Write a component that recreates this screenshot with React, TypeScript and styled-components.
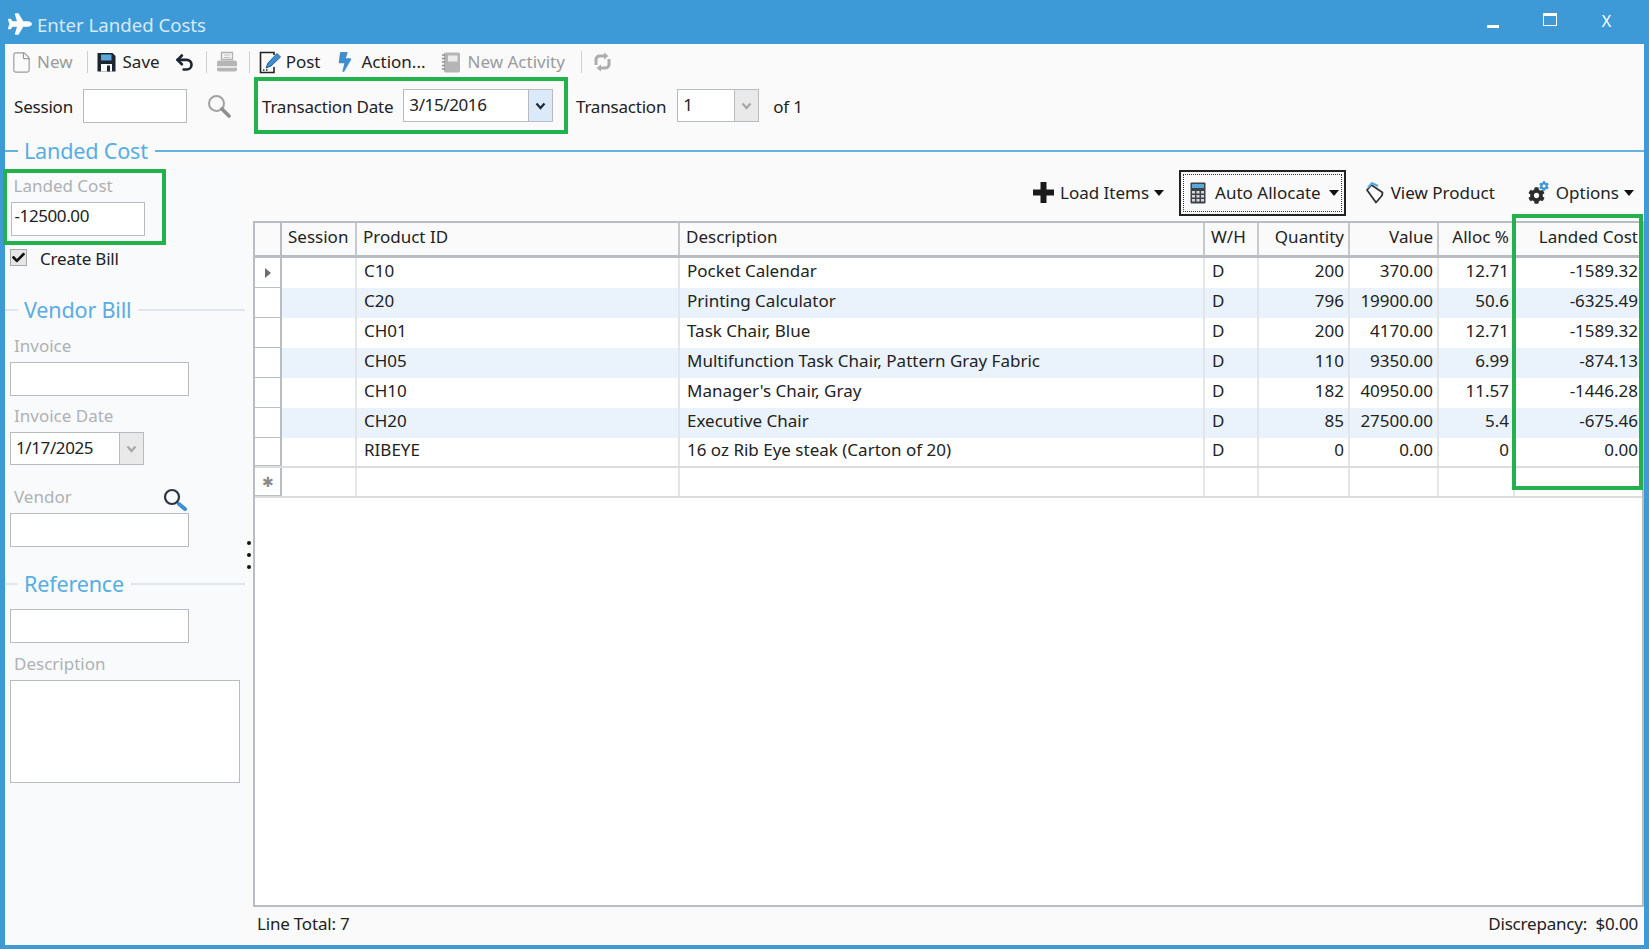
import { ReactNode } from "react";
import styled, { createGlobalStyle } from "styled-components";
import { File, Undo2 } from "lucide-react";
import { FaBolt, FaCheck, FaCog, FaPlane } from "react-icons/fa";

const GlobalStyle = createGlobalStyle`
  html, body {
    margin: 0;
    padding: 0;
    height: 100%;
    overflow: hidden;
    background: #fafafa;
  }
  * {
    box-sizing: border-box;
  }
`;

const Window = styled.div`
  display: flex;
  flex-direction: column;
  width: 1649px;
  height: 949px;
  background: #fafafa;
  color: #222;
  font-family: "Noto Sans", "Open Sans", sans-serif;
  font-size: 17px;
  border: solid #3e9ad6;
  border-width: 0 5px 4px 5px;
`;

const TitleBar = styled.div`
  display: flex;
  align-items: center;
  flex: none;
  height: 44px;
  margin: 0 -5px;
  padding: 4px 14px 0 8px;
  background: #3e9ad6;
  color: #d6e9f6;
  font-size: 18.6px;
`;

const TitleText = styled.span`
  margin-left: 5px;
  flex: 1;
`;

const WindowControl = styled.div`
  display: flex;
  align-items: center;
  justify-content: center;
  width: 57px;
  height: 30px;
  margin-bottom: 6px;
  color: #fff;
`;

const MinimizeGlyph = styled.div`
  width: 12px;
  height: 3px;
  margin-top: 10px;
  background: #fff;
`;

const MaximizeGlyph = styled.div`
  width: 14px;
  height: 13px;
  margin-top: -3px;
  border: 1.5px solid #fff;
  border-top-width: 3px;
`;

const CloseGlyph = styled.span`
  font-size: 16px;
`;

const Toolbar = styled.div`
  display: flex;
  align-items: center;
  flex: none;
  height: 33px;
  padding: 3px 0 0 5px;
`;

const ToolItem = styled.div<{ $muted?: boolean; $gap?: number; $left?: number }>`
  display: flex;
  align-items: center;
  gap: ${(p) => p.$gap ?? 7}px;
  margin-left: ${(p) => p.$left ?? 0}px;
  color: ${(p) => (p.$muted ? "#9a9a9a" : "#222")};
`;

const ToolLabel = styled.span`
  margin-top: -2px;
`;

const ToolSeparator = styled.div<{ $left?: number }>`
  width: 1px;
  height: 22px;
  margin-left: ${(p) => p.$left ?? 14}px;
  background: #cfcfcf;
`;

const FieldRow = styled.div`
  display: flex;
  align-items: center;
  flex: none;
  height: 57px;
  padding-left: 9px;
`;

const PlainLabel = styled.span<{ $left?: number }>`
  margin-left: ${(p) => p.$left ?? 0}px;
  padding-top: 2px;
  letter-spacing: -0.2px;
`;

const TextBox = styled.div<{ $width: number; $height?: number; $top?: number; $left?: number }>`
  display: flex;
  align-items: center;
  flex: none;
  width: ${(p) => p.$width}px;
  height: ${(p) => p.$height ?? 34}px;
  margin-top: ${(p) => p.$top ?? 0}px;
  margin-left: ${(p) => p.$left ?? 0}px;
  padding: 0 0 3px 5px;
  background: #fff;
  border: 1.5px solid #b8bcc2;
  letter-spacing: -0.4px;
`;

const CostInput = styled(TextBox)`
  padding: 0 0 8px 3px;
`;

const ComboBox = styled(TextBox)`
  position: relative;
`;

const ComboButton = styled.div<{ $active?: boolean }>`
  position: absolute;
  top: 0;
  right: 0;
  bottom: 0;
  width: 24px;
  display: flex;
  align-items: center;
  justify-content: center;
  background: ${(p) => (p.$active ? "#dbe9f8" : "#e9e9e9")};
  border-left: 1px solid #b8bcc2;
`;

const Chevron = ({ dark }: { dark?: boolean }) => (
  <svg width="11" height="8" viewBox="0 0 11 8" fill="none">
    <path d="M1.5 1.5 5.5 6 9.5 1.5" stroke={dark ? "#1d2a3a" : "#a8a8a8"} strokeWidth="2.2" />
  </svg>
);

const SessionLookup = styled.div`
  display: flex;
  margin-left: 20px;
`;

const GreenBox = styled.div`
  display: flex;
  align-items: center;
  flex: none;
  height: 57px;
  margin-left: 23px;
  padding: 0 0 0 4px;
  width: 314px;
  border: 4px solid #22b14c;
`;

const LegendRow = styled.div<{ $strong?: boolean; $top?: number; $height?: number }>`
  display: flex;
  align-items: center;
  flex: none;
  height: ${(p) => p.$height ?? 30}px;
  margin-top: ${(p) => p.$top ?? 0}px;
  color: #58ade3;
  font-size: 21.6px;
  letter-spacing: -0.2px;
  &::before,
  &::after {
    content: "";
    height: 2px;
    background: ${(p) => (p.$strong ? "#66b2e3" : "#dfe6ee")};
  }
  &::before {
    width: 13px;
    margin-right: 6px;
  }
  &::after {
    flex: 1;
    margin-left: 7px;
  }
`;

const LegendText = styled.span`
  margin-top: -2px;
`;

const Main = styled.div`
  display: flex;
  flex: 1;
  min-height: 0;
`;

const LeftPane = styled.div`
  display: flex;
  flex-direction: column;
  flex: none;
  width: 240px;
  background: #f9fafb;
`;

const CostBox = styled.div`
  flex: none;
  width: 163px;
  height: 76px;
  margin: 1px 0 0 -2px;
  padding: 5px 0 0 3.5px;
  border: 4px solid #22b14c;
`;

const FieldLabel = styled.div<{ $top?: number }>`
  height: 20px;
  line-height: 18px;
  margin-top: ${(p) => p.$top ?? 0}px;
  padding-left: 9px;
  color: #aeb1b5;
`;

const CostLabel = styled(FieldLabel)`
  padding-left: 3px;
  line-height: 16px;
`;

const LabelWithIcon = styled(FieldLabel)`
  display: flex;
  justify-content: space-between;
  width: 182px;
`;

const CheckRow = styled.div`
  display: flex;
  align-items: center;
  gap: 13px;
  height: 20px;
  margin: 3px 0 0 5px;
  letter-spacing: -0.2px;
`;

const CheckMark = styled.div`
  display: flex;
  align-items: center;
  justify-content: center;
  width: 17px;
  height: 17px;
  margin-top: -2px;
  background: #e6e6e6;
  border: 1.5px solid #a9a9a9;
  color: #111;
  font-size: 13px;
`;

const BoxIndent = styled.div`
  padding-left: 5px;
`;

const Splitter = styled.div`
  display: flex;
  flex-direction: column;
  align-items: center;
  justify-content: center;
  gap: 8px;
  flex: none;
  width: 8px;
  padding-bottom: 3px;
`;

const SplitterDot = styled.div`
  width: 4px;
  height: 4px;
  border-radius: 50%;
  background: #111;
`;

const RightPane = styled.div`
  display: flex;
  flex-direction: column;
  flex: 1;
  min-width: 0;
`;

const GridTools = styled.div`
  display: flex;
  align-items: center;
  justify-content: flex-end;
  flex: none;
  height: 49px;
  margin-bottom: 4px;
  padding-right: 10px;
`;

const GridTool = styled.div<{ $left?: number }>`
  display: flex;
  align-items: center;
  gap: 6px;
  margin-left: ${(p) => p.$left ?? 0}px;
`;

const FocusedTool = styled(GridTool)`
  position: relative;
  height: 46px;
  padding: 0 5px 0 9px;
  gap: 9px;
  border: 2px solid #222;
  &::after {
    content: "";
    position: absolute;
    inset: 2px;
    border: 1px dotted #333;
  }
`;

const ToolCaret = styled.div`
  width: 0;
  height: 0;
  margin-left: -1px;
  border-left: 5.5px solid transparent;
  border-right: 5.5px solid transparent;
  border-top: 6px solid #111;
`;

const GridArea = styled.div`
  position: relative;
  flex: 1;
  min-height: 0;
  background: #fff;
  border: 2px solid #b9bcc0;
`;

const COLUMNS = "27px 75px 323px 525px 54px 91px 89px 76px 1fr";

const GridRow = styled.div<{ $stripe?: boolean; $last?: boolean }>`
  display: grid;
  grid-template-columns: ${COLUMNS};
  height: 30px;
  background: ${(p) => (p.$stripe ? "#eaf3fb" : "#fff")};
  ${(p) => p.$last && "border-bottom: 2px solid #dcdcdc;"}
`;

const HeaderRow = styled(GridRow)`
  height: 35px;
  background: #fafafa;
  border-bottom: 3px solid #b9bcc0;
`;

const HeaderCell = styled.div<{ $right?: boolean; $plain?: boolean }>`
  display: flex;
  align-items: center;
  justify-content: ${(p) => (p.$right ? "flex-end" : "flex-start")};
  padding: 0 ${(p) => (p.$right ? 4 : 6)}px 5px 6px;
  border-right: ${(p) => (p.$plain ? "0" : "2.5px solid #c6c8cb")};
  white-space: nowrap;
`;

const Cell = styled.div<{ $right?: boolean; $plain?: boolean }>`
  display: flex;
  align-items: center;
  justify-content: ${(p) => (p.$right ? "flex-end" : "flex-start")};
  padding: 0 ${(p) => (p.$right ? 4 : 6)}px 5px 7px;
  border-right: ${(p) => (p.$plain ? "0" : "2px solid #e4e5e7")};
  white-space: nowrap;
`;

const RowHead = styled.div`
  display: flex;
  align-items: center;
  justify-content: center;
  background: #fff;
  color: #777;
  border-right: 2.5px solid #b9bcc0;
  border-bottom: 1.5px solid #b9bcc0;
`;

const HeaderHead = styled(RowHead)`
  background: #fafafa;
  border-bottom: 0;
`;

const RowPointer = styled.div`
  width: 0;
  height: 0;
  border-top: 5px solid transparent;
  border-bottom: 5px solid transparent;
  border-left: 6px solid #6d6d6d;
`;

const NewRowMark = styled.span`
  font-size: 14px;
  color: #8a8a8a;
`;

const ColumnHighlight = styled.div`
  position: absolute;
  top: -9px;
  left: 1257px;
  width: 131px;
  height: 276px;
  border: 4px solid #22b14c;
  pointer-events: none;
`;

const Footer = styled.div`
  display: flex;
  align-items: center;
  justify-content: space-between;
  flex: none;
  height: 38px;
  padding: 0 6px 5px 4px;
  letter-spacing: -0.2px;
`;

const FooterValue = styled.span`
  white-space: pre;
`;

const SaveIcon = () => (
  <svg width="19" height="20" viewBox="0 0 19 20">
    <path d="M0.5 1h15l3 3v15.5H0.5z" fill="#1c2530" />
    <rect x="4" y="2.5" width="10.5" height="6" fill="#5aa9de" />
    <rect x="4" y="12" width="11" height="7.5" fill="#fafafa" />
    <rect x="10" y="13.5" width="3" height="6" fill="#1c2530" />
  </svg>
);

const PrintIcon = () => (
  <svg width="22" height="22" viewBox="0 0 22 22">
    <path d="M5.5 1.5h11v7h-11z" fill="#f4f4f4" stroke="#b2b2b2" strokeWidth="1.4" />
    <path d="M8 4h6M8 6.5h6" stroke="#c2c2c2" strokeWidth="1" />
    <rect x="1" y="9.5" width="20" height="11" rx="2" fill="#b5b5b5" />
    <rect x="1" y="15" width="20" height="2" fill="#e6e6e6" />
  </svg>
);

const PostIcon = () => (
  <svg width="23" height="23" viewBox="0 0 23 23" fill="none">
    <path d="M15 4V1.5H1.5v20H15V16" stroke="#222" strokeWidth="1.6" />
    <path d="M7 17 9 12 18 2.5l3.5 3.5L12 15z" fill="#3f8fd0" stroke="#1f5f96" strokeWidth="1" />
    <path d="M4 19h1.5M7 19h1.5" stroke="#222" strokeWidth="1.4" />
  </svg>
);

const ActivityIcon = () => (
  <svg width="20" height="23" viewBox="0 0 20 23">
    <rect x="3" y="1.5" width="16" height="20" rx="1.5" fill="#b5b5b5" />
    <rect x="7" y="4.5" width="9.5" height="6" fill="#ececec" />
    <path d="M1 4h3M1 7.5h3M1 11h3M1 14.5h3M1 18h3" stroke="#8d8d8d" strokeWidth="1.4" />
  </svg>
);

const RepeatIcon = () => (
  <svg width="19" height="20" viewBox="0 0 19 20" fill="none">
    <path d="M3 13V7.5A3.5 3.5 0 0 1 6.5 4H12" stroke="#adadad" strokeWidth="3" />
    <path d="M11 0.5 15.5 4 11 7.5z" fill="#adadad" />
    <path d="M16 7v5.5a3.5 3.5 0 0 1-3.5 3.5H7" stroke="#adadad" strokeWidth="3" />
    <path d="M8 12.5 3.5 16 8 19.5z" fill="#adadad" />
  </svg>
);

const GraySearchIcon = () => (
  <svg width="24" height="24" viewBox="0 0 24 24" fill="none">
    <circle cx="9.5" cy="9.5" r="7.5" stroke="#a2a2a2" strokeWidth="2" />
    <path d="M15 15 22 22" stroke="#8e8e8e" strokeWidth="3.6" strokeLinecap="round" />
  </svg>
);

const VendorSearchIcon = () => (
  <svg width="24" height="23" viewBox="0 0 24 23" fill="none">
    <circle cx="9" cy="9" r="7" stroke="#2b3440" strokeWidth="2.2" />
    <path d="M14 14 16 16" stroke="#2b3440" strokeWidth="2.2" />
    <path d="M16 16 22 21" stroke="#3f8fd0" strokeWidth="4" strokeLinecap="round" />
  </svg>
);

const PlusIcon = () => (
  <svg width="21" height="21" viewBox="0 0 21 21">
    <path d="M7.5 0h6v7.5H21v6h-7.5V21h-6v-7.5H0v-6h7.5z" fill="#1a1a1a" />
  </svg>
);

const CalculatorIcon = () => (
  <svg width="16" height="22" viewBox="0 0 16 22">
    <rect x="0.5" y="0.5" width="15" height="21" rx="1" fill="#3e4349" />
    <rect x="2" y="2" width="12" height="4" fill="#5aa9de" />
    <path d="M2 9h3v2.5H2zM6.5 9h3v2.5h-3zM11 9h3v2.5h-3zM2 13h3v2.5H2zM6.5 13h3v2.5h-3zM11 13h3v2.5h-3zM2 17h3v2.5H2zM6.5 17h3v2.5h-3zM11 17h3v2.5h-3z" fill="#d6d6d6" />
  </svg>
);

const TagIcon = () => (
  <svg width="20" height="22" viewBox="0 0 20 22" fill="none">
    <path d="M2 8 6.5 3l11 7.5-.5 3L11 20.5z" fill="#fff" stroke="#333" strokeWidth="1.8" strokeLinejoin="round" />
    <path d="M3 5.5 7 1l6 3" stroke="#5aa9de" strokeWidth="2" />
  </svg>
);

const OptionsIcon = () => (
  <svg width="22" height="24" viewBox="0 0 22 24">
    <g transform="translate(0 6)">
      <FaCog size={17} color="#2d2d2d" />
    </g>
    <g transform="translate(11 0)">
      <FaCog size={10} color="#3f95d6" />
    </g>
  </svg>
);

type Line = { id: string; name: string; qty: string; value: string; alloc: string; cost: string };

const lines: Line[] = [
  { id: "C10", name: "Pocket Calendar", qty: "200", value: "370.00", alloc: "12.71", cost: "-1589.32" },
  { id: "C20", name: "Printing Calculator", qty: "796", value: "19900.00", alloc: "50.6", cost: "-6325.49" },
  { id: "CH01", name: "Task Chair, Blue", qty: "200", value: "4170.00", alloc: "12.71", cost: "-1589.32" },
  { id: "CH05", name: "Multifunction Task Chair, Pattern Gray Fabric", qty: "110", value: "9350.00", alloc: "6.99", cost: "-874.13" },
  { id: "CH10", name: "Manager's Chair, Gray", qty: "182", value: "40950.00", alloc: "11.57", cost: "-1446.28" },
  { id: "CH20", name: "Executive Chair", qty: "85", value: "27500.00", alloc: "5.4", cost: "-675.46" },
  { id: "RIBEYE", name: "16 oz Rib Eye steak (Carton of 20)", qty: "0", value: "0.00", alloc: "0", cost: "0.00" },
];

function Tool({ icon, label, muted, left, gap }: { icon: ReactNode; label?: string; muted?: boolean; left?: number; gap?: number }) {
  return (
    <ToolItem $muted={muted} $left={left} $gap={gap}>
      {icon}
      {label && <ToolLabel>{label}</ToolLabel>}
    </ToolItem>
  );
}

export default function App() {
  return (
    <Window>
      <GlobalStyle />
      <TitleBar>
        <FaPlane size={24} color="#fff" />
        <TitleText>Enter Landed Costs</TitleText>
        <WindowControl>
          <MinimizeGlyph />
        </WindowControl>
        <WindowControl>
          <MaximizeGlyph />
        </WindowControl>
        <WindowControl>
          <CloseGlyph>X</CloseGlyph>
        </WindowControl>
      </TitleBar>

      <Toolbar>
        <Tool icon={<File size={23} strokeWidth={1.2} color="#9a9a9a" />} label="New" muted gap={4} />
        <ToolSeparator />
        <Tool icon={<SaveIcon />} label="Save" left={9} />
        <Tool icon={<Undo2 size={21} strokeWidth={3} color="#1c2530" />} left={14} />
        <ToolSeparator $left={11} />
        <Tool icon={<PrintIcon />} left={9} />
        <ToolSeparator $left={11} />
        <Tool icon={<PostIcon />} label="Post" left={9} gap={4} />
        <Tool icon={<FaBolt size={20} color="#3f8fd0" />} label="Action..." left={14} gap={7} />
        <Tool icon={<ActivityIcon />} label="New Activity" muted left={15} />
        <ToolSeparator $left={16} />
        <Tool icon={<RepeatIcon />} left={11} />
      </Toolbar>

      <FieldRow>
        <PlainLabel>Session</PlainLabel>
        <TextBox $width={104} $left={10} />
        <SessionLookup>
          <GraySearchIcon />
        </SessionLookup>
        <GreenBox>
          <PlainLabel>Transaction Date</PlainLabel>
          <ComboBox $width={150} $height={33} $left={10}>
            3/15/2016
            <ComboButton $active>
              <Chevron dark />
            </ComboButton>
          </ComboBox>
        </GreenBox>
        <PlainLabel $left={8}>Transaction</PlainLabel>
        <ComboBox $width={82} $height={33} $left={11}>
          1
          <ComboButton>
            <Chevron />
          </ComboButton>
        </ComboBox>
        <PlainLabel $left={14}>of 1</PlainLabel>
      </FieldRow>

      <LegendRow $strong $height={34}>
        <LegendText>Landed Cost</LegendText>
      </LegendRow>

      <Main>
        <LeftPane>
          <CostBox>
            <CostLabel>Landed Cost</CostLabel>
            <CostInput $width={134} $height={34} $top={4}>-12500.00</CostInput>
          </CostBox>
          <CheckRow>
            <CheckMark>
              <FaCheck />
            </CheckMark>
            Create Bill
          </CheckRow>

          <LegendRow $top={27}>
            <LegendText>Vendor Bill</LegendText>
          </LegendRow>
          <FieldLabel $top={12}>Invoice</FieldLabel>
          <BoxIndent>
            <TextBox $width={179} $top={5} />
          </BoxIndent>
          <FieldLabel $top={11}>Invoice Date</FieldLabel>
          <BoxIndent>
            <ComboBox $width={134} $height={33} $top={5}>
              1/17/2025
              <ComboButton>
                <Chevron />
              </ComboButton>
            </ComboBox>
          </BoxIndent>
          <LabelWithIcon $top={23}>
            Vendor
            <VendorSearchIcon />
          </LabelWithIcon>
          <BoxIndent>
            <TextBox $width={179} $top={5} />
          </BoxIndent>

          <LegendRow $top={22}>
            <LegendText>Reference</LegendText>
          </LegendRow>
          <BoxIndent>
            <TextBox $width={179} $top={10} />
          </BoxIndent>
          <FieldLabel $top={12}>Description</FieldLabel>
          <BoxIndent>
            <TextBox $width={230} $height={103} $top={5} />
          </BoxIndent>
        </LeftPane>

        <Splitter>
          <SplitterDot />
          <SplitterDot />
          <SplitterDot />
        </Splitter>

        <RightPane>
          <GridTools>
            <GridTool>
              <PlusIcon />
              Load Items
              <ToolCaret />
            </GridTool>
            <FocusedTool $left={15}>
              <CalculatorIcon />
              Auto Allocate
              <ToolCaret />
            </FocusedTool>
            <GridTool $left={19}>
              <TagIcon />
              View Product
            </GridTool>
            <GridTool $left={33}>
              <OptionsIcon />
              Options
              <ToolCaret />
            </GridTool>
          </GridTools>

          <GridArea>
            <HeaderRow>
              <HeaderHead />
              <HeaderCell>Session</HeaderCell>
              <HeaderCell>Product ID</HeaderCell>
              <HeaderCell>Description</HeaderCell>
              <HeaderCell>W/H</HeaderCell>
              <HeaderCell $right>Quantity</HeaderCell>
              <HeaderCell $right>Value</HeaderCell>
              <HeaderCell $right>Alloc %</HeaderCell>
              <HeaderCell $right $plain>Landed Cost</HeaderCell>
            </HeaderRow>
            {lines.map((line, index) => (
              <GridRow key={line.id} $stripe={index % 2 === 1} $last={index === lines.length - 1}>
                <RowHead>{index === 0 && <RowPointer />}</RowHead>
                <Cell />
                <Cell>{line.id}</Cell>
                <Cell>{line.name}</Cell>
                <Cell>D</Cell>
                <Cell $right>{line.qty}</Cell>
                <Cell $right>{line.value}</Cell>
                <Cell $right>{line.alloc}</Cell>
                <Cell $right $plain>{line.cost}</Cell>
              </GridRow>
            ))}
            <GridRow $last>
              <RowHead>
                <NewRowMark>✱</NewRowMark>
              </RowHead>
              <Cell />
              <Cell />
              <Cell />
              <Cell />
              <Cell />
              <Cell />
              <Cell />
              <Cell $plain />
            </GridRow>
            <ColumnHighlight />
          </GridArea>

          <Footer>
            <span>Line Total: 7</span>
            <FooterValue>Discrepancy:  $0.00</FooterValue>
          </Footer>
        </RightPane>
      </Main>
    </Window>
  );
}
